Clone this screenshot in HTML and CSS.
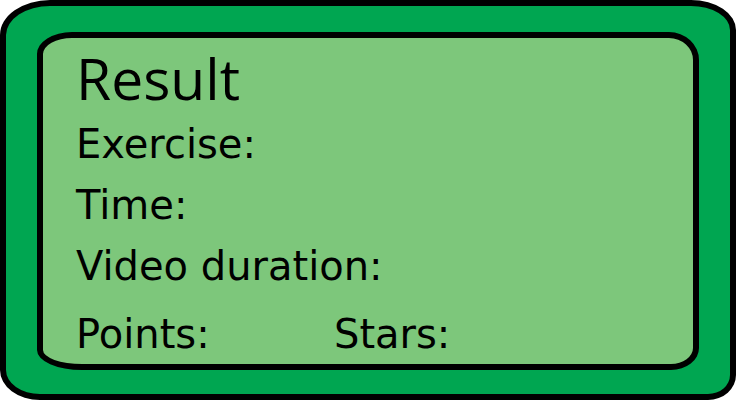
FILE: index.html
```html
<!DOCTYPE html>
<html lang="en">
<head>
<meta charset="utf-8">
<title>Result</title>
<link rel="stylesheet" href="styles.css">
</head>
<body>
<div class="frame">
  <div class="panel">
    <div class="title">Result</div>
    <div class="line exercise">Exercise:</div>
    <div class="line time">Time:</div>
    <div class="line video">Video duration:</div>
    <div class="line score">
      <span class="points">Points:</span>
      <span class="stars">Stars:</span>
    </div>
  </div>
</div>
</body>
</html>
```
FILE: styles.css
```css
html, body {
  margin: 0;
  padding: 0;
  background: #ffffff;
}
body {
  width: 736px;
  height: 403px;
  overflow: hidden;
  font-family: "DejaVu Sans", sans-serif;
  color: #000000;
}
.frame {
  box-sizing: border-box;
  width: 736px;
  height: 400px;
  background: #00a651;
  border: 6px solid #000000;
  border-radius: 50px 45px 28px 40px / 35px 30px 25px 30px;
  padding: 26px 31px 24px 31px;
}
.panel {
  box-sizing: border-box;
  height: 100%;
  background: #7dc77b;
  border: 6px solid #000000;
  border-radius: 35px 30px 28px 45px / 22px 28px 22px 20px;
  padding: 4px 0 0 33px;
}
.title {
  font-family: "Open Sans", "Noto Sans", sans-serif;
  font-size: 57px;
  line-height: 72px;
  height: 72px;
}
.line {
  font-size: 40px;
  line-height: 61px;
  height: 61px;
  white-space: nowrap;
}
.score {
  margin-top: 7px;
  display: flex;
}
.points {
  width: 258px;
}
```
